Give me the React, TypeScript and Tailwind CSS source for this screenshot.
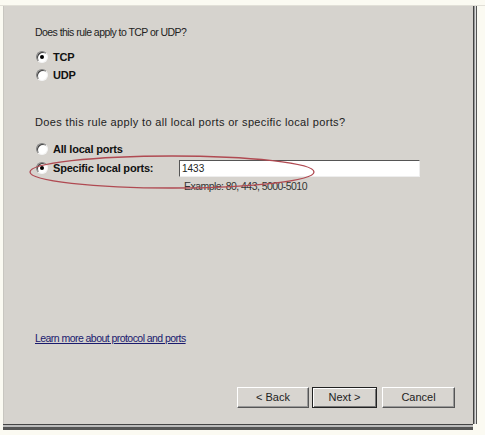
import { useState } from "react";

function Radio({ checked, label, onClick }: { checked: boolean; label: string; onClick: () => void }) {
  return (
    <label onClick={onClick} className="flex h-[18px] items-center gap-[5px] cursor-default">
      <span className="relative flex h-[12px] w-[12px] items-center justify-center rounded-full border border-t-[#808080] border-l-[#808080] border-r-[#f4f4f4] border-b-[#f4f4f4] bg-white shadow-[inset_1px_1px_0_#404040]">
        {checked && <span className="h-[4px] w-[4px] rounded-full bg-black" />}
      </span>
      <span className="font-bold text-[11px] tracking-[-0.2px] text-[#111]">{label}</span>
    </label>
  );
}

function WinButton({ children, isDefault, w }: { children: string; isDefault?: boolean; w: string }) {
  return (
    <button
      type="button"
      className={`h-[21px] ${w} text-[11px] text-[#222] bg-[#d8d5d0] border ${
        isDefault
          ? "border-[#222] shadow-[inset_1px_1px_0_#fff,inset_-1px_-1px_0_#777]"
          : "border-t-[#fff] border-l-[#fff] border-r-[#555] border-b-[#555] shadow-[inset_-1px_-1px_0_#999]"
      }`}
    >
      {children}
    </button>
  );
}

export default function App() {
  const [proto, setProto] = useState("tcp");
  const [scope, setScope] = useState("specific");
  const [ports, setPorts] = useState("1433");

  return (
    <div className="relative h-[435px] w-[485px] overflow-hidden bg-[#fbfaf2] font-['Liberation_Sans',Arial,sans-serif]">
      <div className="h-[6px] border-b border-[#e2e0d8]" />
      <div className="ml-[3px] flex h-[418px] w-[470px] flex-col border-l border-[#c8c6c0] bg-[#d6d3ce] shadow-[1px_0_0_#444,2px_0_0_#999,3px_0_0_#ddd,4px_0_0_#555,0_1px_0_#444,0_3px_0_#bbb,0_6px_0_#555]">
        {/* protocol */}
        <div className="pl-[31px] pt-[20px] text-[10.5px] leading-[13px] tracking-[-0.55px] text-[#222]">
          Does this rule apply to TCP or UDP?
        </div>
        <div className="mt-[9px] flex flex-col pl-[32px]">
          <Radio checked={proto === "tcp"} label="TCP" onClick={() => setProto("tcp")} />
          <Radio checked={proto === "udp"} label="UDP" onClick={() => setProto("udp")} />
        </div>

        {/* ports */}
        <div className="mt-[32px] pl-[31px] text-[11px] leading-[13px] tracking-[0.35px] text-[#222]">
          Does this rule apply to all local ports or specific local ports?
        </div>
        <div className="mt-[11px] flex flex-col pl-[32px]">
          <Radio checked={scope === "all"} label="All local ports" onClick={() => setScope("all")} />
          <div className="mt-[1px] flex items-center">
            <div className="w-[143px]">
              <Radio checked={scope === "specific"} label="Specific local ports:" onClick={() => setScope("specific")} />
            </div>
            <input
              value={ports}
              onChange={(e) => setPorts(e.target.value)}
              className="h-[17px] w-[241px] border border-t-[#555] border-l-[#555] border-r-[#eee] border-b-[#eee] bg-white px-[2px] text-[10px] text-[#222] outline-none"
            />
          </div>
          <div className="ml-[148px] mt-[3px] text-[10.5px] leading-[13px] tracking-[-0.55px] text-[#333]">
            Example: 80, 443, 5000-5010
          </div>
        </div>

        <div className="flex-1" />

        <a href="#" className="pl-[31px] text-[10.5px] leading-[13px] tracking-[-0.55px] text-[#1a1a6e] underline">
          Learn more about protocol and ports
        </a>

        <div className="mb-[16px] mt-[42px] flex items-center justify-end pr-[18px]">
          <WinButton w="w-[72px]">&lt; Back</WinButton>
          <div className="ml-[3px] flex">
            <WinButton isDefault w="w-[65px]">Next &gt;</WinButton>
          </div>
          <div className="ml-[5px] flex">
            <WinButton w="w-[73px]">Cancel</WinButton>
          </div>
        </div>
      </div>

      {/* red annotation */}
      <svg className="pointer-events-none absolute left-0 top-0" width="485" height="435">
        <ellipse cx="172" cy="172" rx="142" ry="16" fill="none" stroke="#b04a52" strokeWidth="1.3" />
      </svg>
    </div>
  );
}
